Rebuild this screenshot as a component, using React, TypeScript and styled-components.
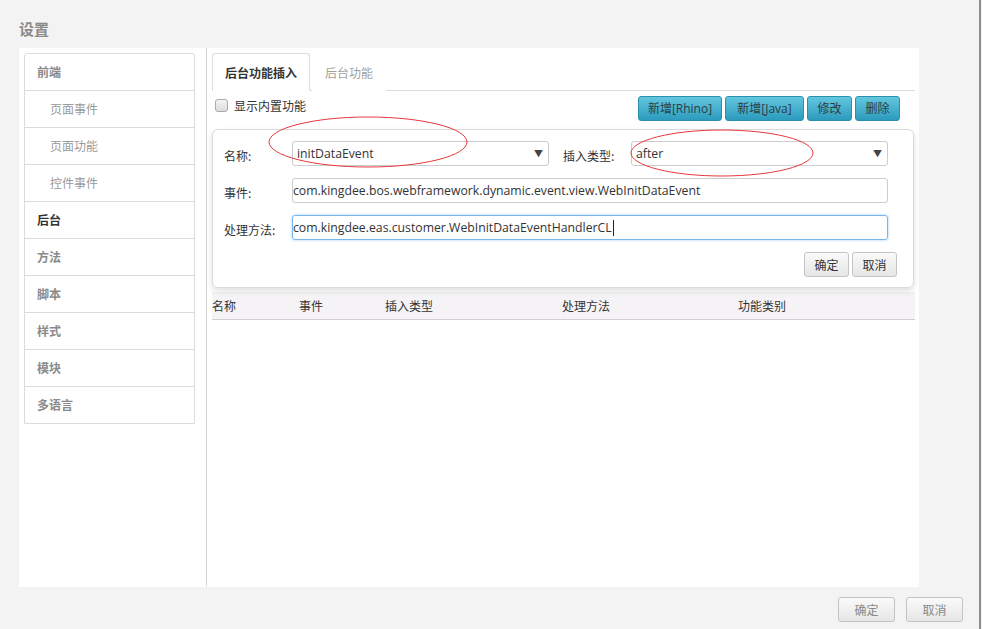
import React from "react";
import styled, { createGlobalStyle } from "styled-components";

const GlobalStyle = createGlobalStyle`
  html, body {
    margin: 0;
    padding: 0;
    background: #f3f3f3;
  }
  body {
    font-family: "Open Sans", "Noto Sans CJK SC", sans-serif;
    font-size: 12px;
    color: #333;
  }
`;

const navItems = [
  { label: "前端", sub: false, active: false },
  { label: "页面事件", sub: true, active: false },
  { label: "页面功能", sub: true, active: false },
  { label: "控件事件", sub: true, active: false },
  { label: "后台", sub: false, active: true },
  { label: "方法", sub: false, active: false },
  { label: "脚本", sub: false, active: false },
  { label: "样式", sub: false, active: false },
  { label: "模块", sub: false, active: false },
  { label: "多语言", sub: false, active: false },
];

const columns = [
  { label: "名称", width: 87 },
  { label: "事件", width: 86 },
  { label: "插入类型", width: 177 },
  { label: "处理方法", width: 176 },
  { label: "功能类别", width: 0 },
];

const App = () => {
  return (
    <>
      <GlobalStyle />
      <Page>
        <Main>
          <Title>设置</Title>
          <Panel>
            <Side>
              <Nav>
                {navItems.map((item) => (
                  <NavItem key={item.label} $sub={item.sub} $active={item.active}>
                    {item.label}
                  </NavItem>
                ))}
              </Nav>
            </Side>
            <Content>
              <Tabs>
                <Tab $active>后台功能插入</Tab>
                <Tab>后台功能</Tab>
              </Tabs>
              <Toolbar>
                <CheckLabel>
                  <CheckBox />
                  显示内置功能
                </CheckLabel>
                <ButtonGroup>
                  <BlueButton $width={84}>新增[Rhino]</BlueButton>
                  <BlueButton $width={79}>新增[Java]</BlueButton>
                  <BlueButton $width={45}>修改</BlueButton>
                  <BlueButton $width={45}>删除</BlueButton>
                </ButtonGroup>
              </Toolbar>
              <FormCard>
                <FormRow>
                  <FieldLabel>名称:</FieldLabel>
                  <Select>
                    initDataEvent
                    <Arrow>▼</Arrow>
                  </Select>
                  <FieldLabel $gap>插入类型:</FieldLabel>
                  <Select>
                    after
                    <Arrow>▼</Arrow>
                  </Select>
                </FormRow>
                <FormRow>
                  <FieldLabel>事件:</FieldLabel>
                  <Input>com.kingdee.bos.webframework.dynamic.event.view.WebInitDataEvent</Input>
                </FormRow>
                <FormRow>
                  <FieldLabel>处理方法:</FieldLabel>
                  <Input $focus>
                    com.kingdee.eas.customer.WebInitDataEventHandlerCL
                    <Caret />
                  </Input>
                </FormRow>
                <FormActions>
                  <GrayButton $width={45}>确定</GrayButton>
                  <GrayButton $width={45}>取消</GrayButton>
                </FormActions>
                <Marks viewBox="0 0 701 158" width="701" height="158">
                  <ellipse cx="155" cy="12" rx="99" ry="25" fill="none" stroke="#e8383d" strokeWidth="1" />
                  <ellipse cx="509" cy="23" rx="91" ry="23" fill="none" stroke="#e8383d" strokeWidth="1" />
                </Marks>
              </FormCard>
              <TableHead>
                {columns.map((c) => (
                  <HeadCell key={c.label} $width={c.width}>
                    {c.label}
                  </HeadCell>
                ))}
              </TableHead>
            </Content>
          </Panel>
          <Footer>
            <GrayButton $width={57} $muted>
              确定
            </GrayButton>
            <GrayButton $width={57} $muted>
              取消
            </GrayButton>
          </Footer>
        </Main>
        <Edge />
      </Page>
    </>
  );
};

export default App;

const Page = styled.div`
  display: flex;
  width: 982px;
  height: 629px;
  overflow: hidden;
`;

const Main = styled.div`
  flex: 1;
  display: flex;
  flex-direction: column;
`;

const Edge = styled.div`
  width: 2px;
  margin-right: 1px;
  background: #8c8c8c;
`;

const Title = styled.div`
  height: 48px;
  box-sizing: border-box;
  padding: 19px 0 0 19px;
  font-family: "Noto Sans CJK SC", sans-serif;
  font-size: 15px;
  font-weight: bold;
  line-height: 20px;
  color: #8a8a8a;
`;

const Panel = styled.div`
  display: flex;
  width: 900px;
  height: 539px;
  margin-left: 19px;
  background: #fff;
`;

const Side = styled.div`
  width: 188px;
  padding: 5px 0 0 5px;
  border-right: 1px solid #d4d4d4;
  box-sizing: border-box;
  margin-bottom: 1px;
`;

const Nav = styled.div`
  width: 171px;
  border: 1px solid #dcdcdc;
  border-radius: 3px 3px 0 0;
  box-sizing: border-box;
`;

const NavItem = styled.div<{ $sub?: boolean; $active?: boolean }>`
  height: 37px;
  box-sizing: border-box;
  padding-left: ${(p) => (p.$sub ? 25 : 12)}px;
  line-height: 36px;
  font-family: "Noto Sans CJK SC", sans-serif;
  font-size: 12px;
  font-weight: ${(p) => (p.$sub ? "normal" : "bold")};
  color: ${(p) => (p.$active ? "#333" : p.$sub ? "#9a9a9a" : "#8a8a8a")};
  border-top: 1px solid #dcdcdc;

  &:first-child {
    border-top: none;
    height: 36px;
  }
`;

const Content = styled.div`
  flex: 1;
  padding: 5px 4px 0 5px;
  display: flex;
  flex-direction: column;
`;

const Tabs = styled.div`
  display: flex;
  height: 37px;
  border-bottom: 1px solid #ddd;
`;

const Tab = styled.div<{ $active?: boolean }>`
  padding: 0 12px;
  height: 38px;
  box-sizing: border-box;
  line-height: 38px;
  font-family: "Noto Sans CJK SC", sans-serif;
  font-size: 12px;
  font-weight: ${(p) => (p.$active ? "bold" : "normal")};
  color: ${(p) => (p.$active ? "#333" : "#a0a0a0")};
  border: 1px solid ${(p) => (p.$active ? "#ddd" : "transparent")};
  border-bottom: none;
  border-radius: 3px 3px 0 0;
  background: #fff;
  margin-bottom: -1px;
  margin-left: ${(p) => (p.$active ? 0 : 2)}px;
`;

const Toolbar = styled.div`
  display: flex;
  justify-content: space-between;
  align-items: center;
  height: 38px;
  padding: 0 15px 0 3px;
`;

const CheckLabel = styled.div`
  display: flex;
  align-items: center;
  gap: 6px;
  margin-top: -10px;
  font-family: "Noto Sans CJK SC", sans-serif;
  font-size: 12px;
  color: #333;
`;

const CheckBox = styled.span`
  width: 11px;
  height: 11px;
  border: 1px solid #aaa;
  border-radius: 3px;
  background: linear-gradient(#f4f4f4, #dcdcdc);
`;

const ButtonGroup = styled.div`
  display: flex;
  gap: 3px;
  margin-top: -3px;
`;

const BlueButton = styled.div<{ $width: number }>`
  width: ${(p) => p.$width}px;
  height: 25px;
  box-sizing: border-box;
  text-align: center;
  line-height: 23px;
  font-family: "Open Sans", "Noto Sans CJK SC", sans-serif;
  font-size: 12px;
  color: #2c3e44;
  background: linear-gradient(#63c6df, #2c9bbd);
  border: 1px solid #2b8fae;
  border-radius: 3px;
`;

const FormCard = styled.div`
  position: relative;
  padding: 11px 16px 10px 11px;
  border: 1px solid #dadada;
  border-radius: 6px;
  box-shadow: 0 3px 6px rgba(0, 0, 0, 0.13);
  display: flex;
  flex-direction: column;
  gap: 12px;
  margin-right: 1px;
`;

const FormRow = styled.div`
  display: flex;
  align-items: center;
  padding-right: 9px;
`;

const FieldLabel = styled.div<{ $gap?: boolean }>`
  width: 68px;
  flex-shrink: 0;
  margin-left: ${(p) => (p.$gap ? 14 : 0)}px;
  padding-top: 4px;
  font-family: "Noto Sans CJK SC", sans-serif;
  font-size: 12px;
  color: #333;
`;

const Select = styled.div`
  position: relative;
  flex: 1;
  height: 25px;
  box-sizing: border-box;
  padding-left: 4px;
  line-height: 24px;
  font-size: 12.25px;
  color: #333;
  border: 1px solid #ccc;
  border-radius: 3px;
`;

const Arrow = styled.span`
  position: absolute;
  right: 5px;
  top: 0;
  font-size: 9px;
  color: #444;
`;

const Input = styled.div<{ $focus?: boolean }>`
  flex: 1;
  display: flex;
  align-items: center;
  height: 25px;
  box-sizing: border-box;
  padding-left: 0;
  font-size: 12.25px;
  color: #333;
  border: 1px solid ${(p) => (p.$focus ? "#77b6ec" : "#ccc")};
  border-radius: 3px;
  box-shadow: ${(p) => (p.$focus ? "0 0 3px rgba(102, 175, 233, 0.6)" : "none")};
  white-space: nowrap;
`;

const Caret = styled.span`
  display: inline-block;
  width: 1px;
  height: 16px;
  margin-left: 1px;
  background: #222;
`;

const FormActions = styled.div`
  display: flex;
  justify-content: flex-end;
  gap: 3px;
`;

const GrayButton = styled.div<{ $width: number; $muted?: boolean }>`
  width: ${(p) => p.$width}px;
  height: 25px;
  box-sizing: border-box;
  text-align: center;
  line-height: 23px;
  font-family: "Noto Sans CJK SC", sans-serif;
  font-size: 12px;
  color: ${(p) => (p.$muted ? "#888" : "#333")};
  background: linear-gradient(#fafafa, #e6e6e6);
  border: 1px solid #c4c4c4;
  border-radius: 3px;
`;

const Marks = styled.svg`
  position: absolute;
  left: 0;
  top: 0;
  overflow: visible;
  pointer-events: none;
`;

const TableHead = styled.div`
  display: flex;
  height: 28px;
  margin-top: 4px;
  align-items: center;
  background: #f6f3f6;
  border-bottom: 1px solid #cfcfcf;
  box-sizing: border-box;
`;

const HeadCell = styled.div<{ $width: number }>`
  ${(p) => (p.$width ? `width: ${p.$width}px;` : "flex: 1;")}
  font-family: "Noto Sans CJK SC", sans-serif;
  font-size: 12px;
  color: #333;
`;

const Footer = styled.div`
  display: flex;
  justify-content: flex-end;
  gap: 11px;
  padding: 10px 16px 0 0;
`;
